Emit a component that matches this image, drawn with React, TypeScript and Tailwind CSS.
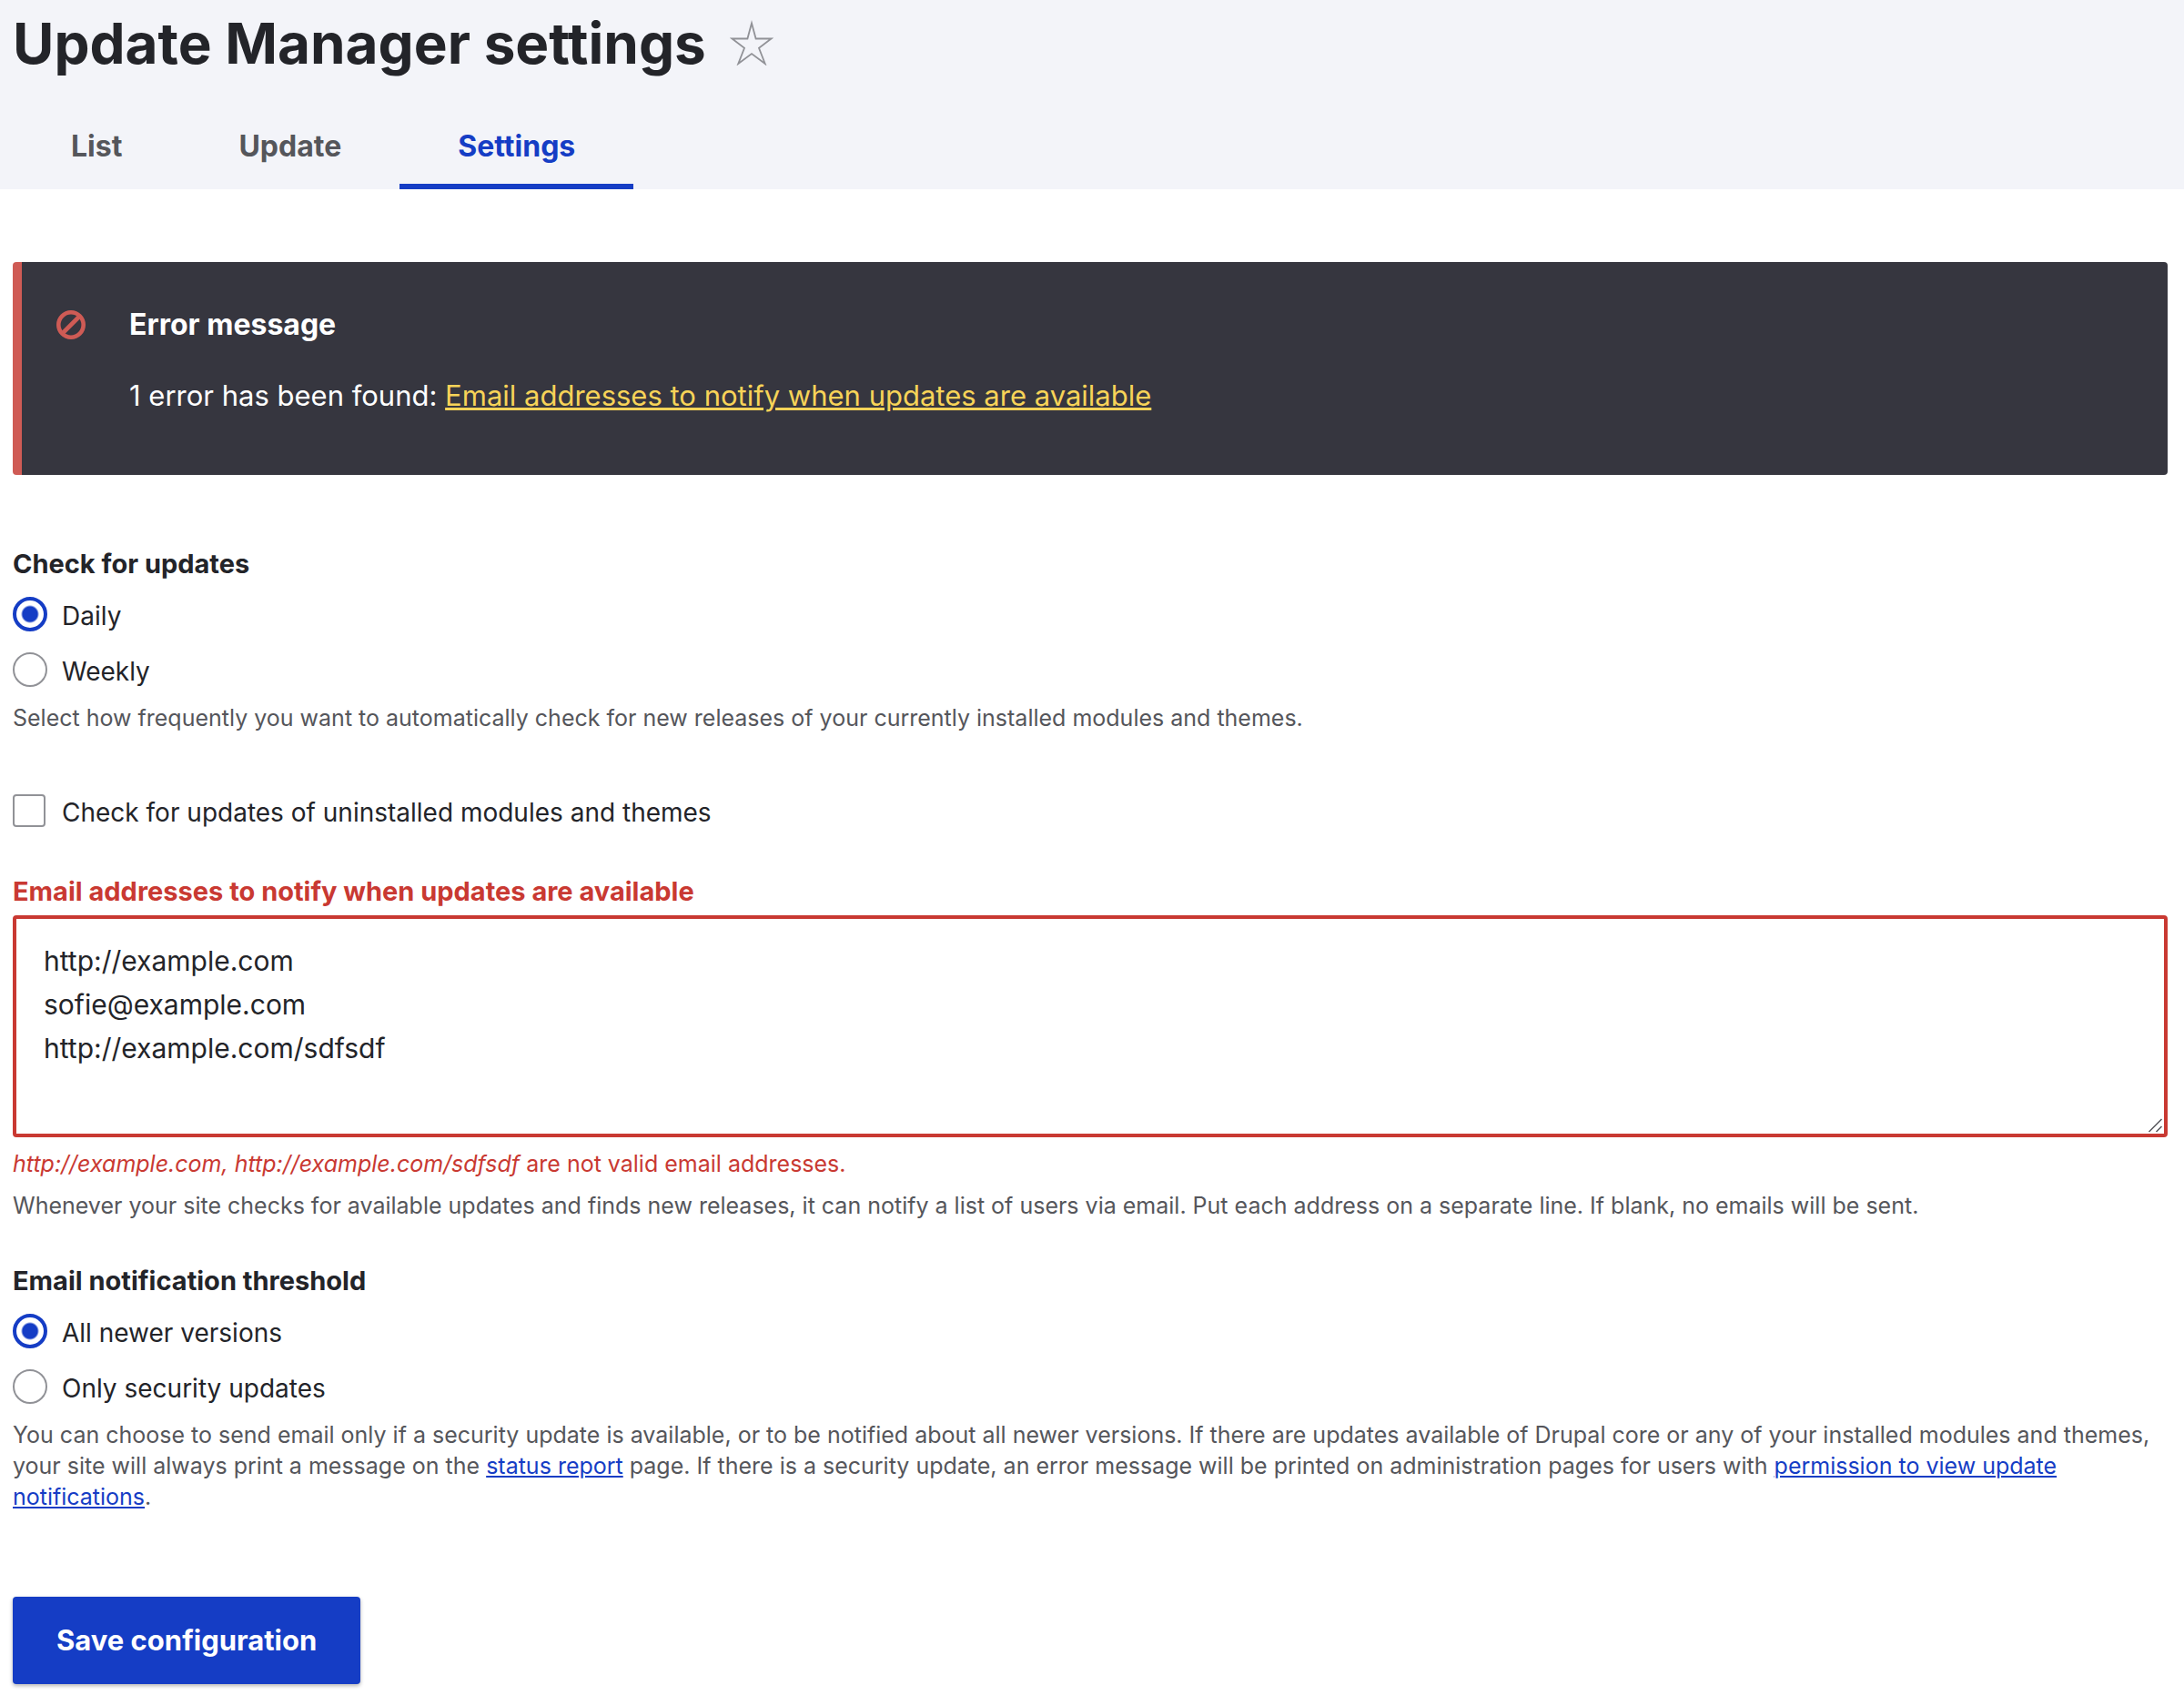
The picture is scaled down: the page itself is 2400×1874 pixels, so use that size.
import React from "react";

const frequencies = ["Daily", "Weekly"];
const thresholds = ["All newer versions", "Only security updates"];

const tabs = [
  { label: "List", active: false },
  { label: "Update", active: false },
  { label: "Settings", active: true },
];

const linkClass = "text-[#153dc5] underline decoration-2 underline-offset-2";
const descriptionClass = "text-[25px] leading-[34px] text-[#55565b]";

const RadioGroup: React.FC<{ legend: string; name: string; options: string[]; children: React.ReactNode }> = ({
  legend,
  name,
  options,
  children,
}) => {
  return (
    <fieldset>
      <legend className="text-[29px] leading-[42px] font-bold">{legend}</legend>
      <div className="mt-[15px] flex flex-col gap-[19px]">
        {options.map((option, index) => (
          <label key={option} className="flex h-[42px] items-center gap-4 text-[28px] leading-[42px]">
            <input
              type="radio"
              name={name}
              defaultChecked={index === 0}
              className="mb-1 size-[38px] shrink-0 appearance-none rounded-full border-2 border-[#919297] bg-white checked:border-4 checked:border-[#153dc5] checked:bg-[radial-gradient(circle,#153dc5_8px,#fff_10px)]"
            />
            {option}
          </label>
        ))}
      </div>
      <p className={`mt-[13px] ${descriptionClass}`}>{children}</p>
    </fieldset>
  );
};

const App: React.FC = () => {
  return (
    <div className="font-['Inter',sans-serif] text-[#232429]">
      <header className="bg-[#f3f4f9] px-[14px] pt-2">
        <div className="flex items-start gap-[26px]">
          <h1 className="text-[62px] leading-[80px] font-bold">Update Manager settings</h1>
          <button type="button" aria-label="Add to shortcuts" className="mt-[14px]">
            <svg width="48" height="50" viewBox="0 0 48 50" fill="none" stroke="#919297" strokeWidth="1.8">
              <path d="M24 3.5 28.6 20.5H45.5L32 30.8 38.7 48 24 37 9.3 48 16 30.8 2.5 20.5H19.4Z" />
            </svg>
          </button>
        </div>
        <nav className="mt-6 flex">
          {tabs.map((tab) => (
            <a
              key={tab.label}
              href="#"
              className={`border-b-[6px] px-16 pt-[25px] pb-[17px] text-[32px] leading-[48px] font-bold ${
                tab.active ? "border-[#153dc5] text-[#153dc5]" : "border-transparent text-[#55565b]"
              }`}
            >
              {tab.label}
            </a>
          ))}
        </nav>
      </header>

      <main className="pr-[18px] pl-[14px] pt-20 pb-6">
        <div
          role="alert"
          className="flex rounded-[4px] border-l-[10px] border-[#cf5b55] bg-[#36363f] pt-[45px] pb-[63px] pl-[38px] text-[31px] leading-[48px] text-white"
        >
          <svg className="mt-2 shrink-0" width="32" height="32" viewBox="0 0 32 32" fill="none" stroke="#cf5b55" strokeWidth="4.6">
            <circle cx="16" cy="16" r="13.7" />
            <path d="M6.5 25.5 25.5 6.5" />
          </svg>
          <div className="ml-12">
            <h2 className="text-[32px] font-bold">Error message</h2>
            <p className="mt-[30px]">
              1 error has been found:{" "}
              <a href="#emails" className="text-[#f7d358] underline decoration-[3px] underline-offset-2">
                Email addresses to notify when updates are available
              </a>
            </p>
          </div>
        </div>

        <form className="mt-[77px]">
          <RadioGroup legend="Check for updates" name="frequency" options={frequencies}>
            Select how frequently you want to automatically check for new releases of your currently installed modules
            and themes.
          </RadioGroup>

          <label className="mt-[66px] flex h-[42px] items-center gap-[18px] text-[28px] leading-[42px]">
            <input
              type="checkbox"
              className="mb-1 size-9 shrink-0 appearance-none rounded-[4px] border-2 border-[#919297] bg-white"
            />
            Check for updates of uninstalled modules and themes
          </label>

          <label htmlFor="emails" className="mt-[45px] block text-[29px] leading-[42px] font-bold text-[#c93932]">
            Email addresses to notify when updates are available
          </label>
          <div className="relative mt-[5px]">
            <textarea
              id="emails"
              rows={4}
              defaultValue={"http://example.com\nsofie@example.com\nhttp://example.com/sdfsdf"}
              className="block w-full resize-y rounded-[4px] border-4 border-[#c93932] bg-white px-[30px] py-[22px] text-[30px] leading-[48px] outline-none"
            />
            {/* resize grip, drawn over the browser's own */}
            <svg
              className="pointer-events-none absolute right-1 bottom-1 bg-white"
              width="18"
              height="18"
              viewBox="0 0 18 18"
              stroke="#55565b"
              strokeWidth="1.5"
            >
              <path d="M1.5 16 15.5 2M9.5 16l6-6" />
            </svg>
          </div>
          <p className="mt-3 text-[25px] leading-[34px] text-[#c93932]">
            <em>http://example.com, http://example.com/sdfsdf</em> are not valid email addresses.
          </p>
          <p className={`mt-3 mb-[45px] ${descriptionClass}`}>
            Whenever your site checks for available updates and finds new releases, it can notify a list of users via
            email. Put each address on a separate line. If blank, no emails will be sent.
          </p>

          <RadioGroup legend="Email notification threshold" name="threshold" options={thresholds}>
            You can choose to send email only if a security update is available, or to be notified about all newer
            versions. If there are updates available of Drupal core or any of your installed modules and themes, your
            site will always print a message on the{" "}
            <a href="#" className={linkClass}>
              status report
            </a>{" "}
            page. If there is a security update, an error message will be printed on administration pages for users with{" "}
            <a href="#" className={linkClass}>
              permission to view update notifications
            </a>
            .
          </RadioGroup>

          <button
            type="submit"
            className="mt-[93px] rounded-[4px] bg-[#153dc5] px-12 py-6 text-[31px] leading-[48px] font-bold text-white shadow-[0_2px_4px_rgba(0,0,0,0.3)]"
          >
            Save configuration
          </button>
        </form>
      </main>
    </div>
  );
};

export default App;
